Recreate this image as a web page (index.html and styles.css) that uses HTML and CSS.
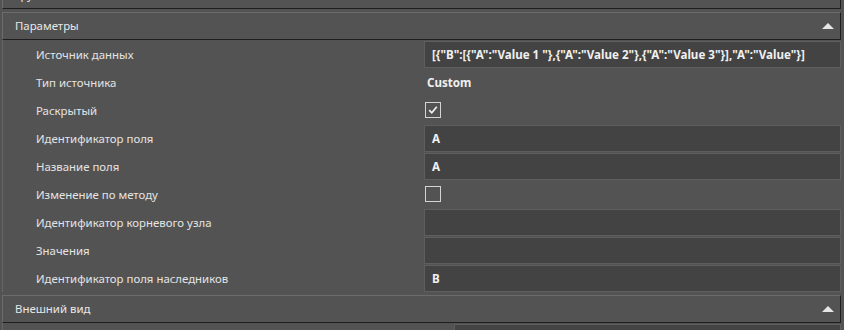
FILE: index.html
```html
<!DOCTYPE html>
<html lang="ru">
<head>
    <meta charset="UTF-8">
    <title>Свойства</title>
    <link rel="stylesheet" href="styles.css">
</head>
<body>
    <div class="grid">
        <div class="section section-cut">
            <div class="section-header">
                <span class="section-title">Группа</span>
                <span class="arrow"></span>
            </div>
        </div>

        <div class="section">
            <div class="section-header">
                <span class="section-title">Параметры</span>
                <span class="arrow"></span>
            </div>
            <div class="section-body">
                <div class="row">
                    <div class="label">Источник данных</div>
                    <div class="value"><div class="input">[{"B":[{"A":"Value 1 "},{"A":"Value 2"},{"A":"Value 3"}],"A":"Value"}]</div></div>
                </div>
                <div class="row">
                    <div class="label">Тип источника</div>
                    <div class="value"><span class="plain">Custom</span></div>
                </div>
                <div class="row">
                    <div class="label">Раскрытый</div>
                    <div class="value">
                        <span class="check">
                            <svg width="14" height="14" viewBox="0 0 14 14"><path d="M3.2 7.2 L5.8 9.8 L10.8 3.8" fill="none" stroke="#f2f2f2" stroke-width="1.7"/></svg>
                        </span>
                    </div>
                </div>
                <div class="row">
                    <div class="label">Идентификатор поля</div>
                    <div class="value"><div class="input">A</div></div>
                </div>
                <div class="row">
                    <div class="label">Название поля</div>
                    <div class="value"><div class="input">A</div></div>
                </div>
                <div class="row">
                    <div class="label">Изменение по методу</div>
                    <div class="value"><span class="check"></span></div>
                </div>
                <div class="row">
                    <div class="label">Идентификатор корневого узла</div>
                    <div class="value"><div class="input"></div></div>
                </div>
                <div class="row">
                    <div class="label">Значения</div>
                    <div class="value"><div class="input"></div></div>
                </div>
                <div class="row">
                    <div class="label">Идентификатор поля наследников</div>
                    <div class="value"><div class="input">B</div></div>
                </div>
            </div>
        </div>

        <div class="section">
            <div class="section-header">
                <span class="section-title">Внешний вид</span>
                <span class="arrow"></span>
            </div>
            <div class="section-body section-body-wide">
                <div class="row">
                    <div class="label"></div>
                    <div class="value"><div class="input"></div></div>
                </div>
            </div>
        </div>
    </div>
</body>
</html>
```

FILE: styles.css
```css
html {
    overflow: hidden;
    height: 330px;
}

body {
    margin: 0;
    background: #535353;
    font-family: "Noto Sans", "Open Sans", sans-serif;
    font-size: 11.4px;
    color: #e4e4e4;
    overflow: hidden;
    height: 330px;
}

.grid {
    padding: 0 3px 0 2px;
}

.section {
    margin-bottom: 3px;
}

.section-cut {
    margin-top: -19px;
}

.section-header {
    height: 26px;
    display: flex;
    align-items: center;
    justify-content: space-between;
    padding: 0 6px 0 12px;
    border-top: 1px solid #6c6c6c;
    border-left: 1px solid #6c6c6c;
    border-right: 1px solid #1e1e1e;
    border-bottom: 1px solid #1e1e1e;
    background: #535353;
}

.section-title {
    color: #e8e8e8;
    padding-bottom: 2px;
}

.arrow {
    width: 0;
    height: 0;
    border-left: 6px solid transparent;
    border-right: 6px solid transparent;
    border-bottom: 6px solid #e6e6e6;
}

.section-body {
    border-left: 1px solid #666666;
}

.row {
    display: grid;
    grid-template-columns: 421px 1fr;
    height: 28px;
    align-items: center;
}

.section-body-wide .row {
    grid-template-columns: 451px 1fr;
}

.label {
    padding-left: 33px;
    white-space: nowrap;
}

.value {
    display: flex;
    align-items: center;
    height: 28px;
}

.input {
    box-sizing: border-box;
    width: 100%;
    height: 27px;
    margin-top: 1px;
    border: 1px solid #5e5e5e;
    background: #434343;
    padding: 0 7px;
    line-height: 25px;
    font-size: 11.6px;
    font-weight: bold;
    color: #f0f0f0;
    white-space: nowrap;
    overflow: hidden;
}

.plain {
    padding-left: 3px;
    font-size: 11.6px;
    font-weight: bold;
    color: #f0f0f0;
}

.check {
    box-sizing: border-box;
    width: 16px;
    height: 16px;
    margin-left: 1px;
    border: 1px solid #d4d4d4;
    display: flex;
    align-items: center;
    justify-content: center;
}
```
